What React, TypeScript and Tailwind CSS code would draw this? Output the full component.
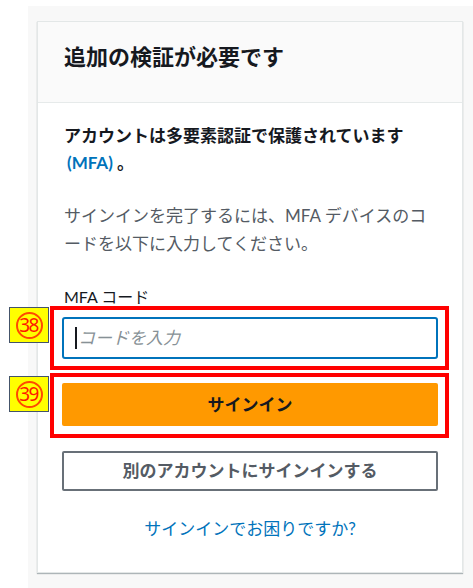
import React from "react";

const font = { fontFamily: '"Lato", "Noto Sans CJK JP", "Noto Sans", sans-serif' };

function Badge({ n, className }: { n: string; className: string }) {
  return (
    <div
      className={`absolute w-[40px] h-[36px] bg-[#ffff00] border border-[#44546a] flex items-center justify-center ${className}`}
    >
      <div className="w-[27px] h-[27px] rounded-full border-2 border-[#ff4a00] flex items-center justify-center">
        <span
          className="text-[#ff1a00] text-[19px] leading-none tracking-[-1.5px] pr-[1px]"
          style={{ fontFamily: '"Liberation Sans Narrow", "Noto Sans", sans-serif' }}
        >
          {n}
        </span>
      </div>
    </div>
  );
}

export default function App() {
  return (
    <div className="w-[473px] h-[588px] bg-white pl-[28px] pt-[6px] overflow-hidden" style={font}>
      <div className="w-full h-full bg-[#f8f8f8] pl-[9px] pt-[15px]">
        <div className="w-[426px] h-[552px] bg-white border border-[#e3e7e7] shadow-[0_1px_1px_0_rgba(0,28,36,0.3)] flex flex-col">
          <div className="h-[81px] bg-[#fafafa] border-b border-[#e6eaea] px-[26px] pt-[21px]">
            <h1 className="text-[22px] leading-[28px] font-bold text-[#16191f]">追加の検証が必要です</h1>
          </div>
          <div className="flex flex-col px-6 pt-[19px]">
            <p className="text-[17px] leading-[27px] font-bold text-[#16191f] pl-[2px]">
              アカウントは多要素認証で保護されています
              <br />
              <span className="text-[#0073bb] pl-[3px]">(MFA)</span> 。
            </p>
            <p className="mt-[26px] text-[17px] leading-[28px] text-[#545b64] pl-[2px]">
              サインインを完了するには、MFA デバイスのコ
              <br />
              ードを以下に入力してください。
            </p>
            <label className="mt-[28px] text-[16px] leading-[22px] text-[#16191f] pl-[2px]">MFA コード</label>
            <div className="relative mt-[9px]">
              <div className="h-[42px] w-full rounded-[3px] border-2 border-[#0073bb] bg-white flex items-center pl-[11px]">
                <span className="w-[2px] h-[22px] bg-[#16191f] mr-[1px]" />
                <span className="text-[17px] italic text-[#879196]">コードを入力</span>
              </div>
              <div className="absolute -left-[12px] -right-[11px] -top-[11px] -bottom-[11px] border-4 border-[#ff0000] pointer-events-none" />
              <Badge n="38" className="-left-[53px] -top-[10px]" />
            </div>
            <div className="relative mt-[24px]">
              <button className="h-[43px] w-full rounded-[2px] bg-[#ff9900] text-[17px] font-bold text-[#16191f]">
                サインイン
              </button>
              <div className="absolute -left-[12px] -right-[11px] -top-[10px] -bottom-[12px] border-4 border-[#ff0000] pointer-events-none" />
              <Badge n="39" className="-left-[53px] -top-[7px]" />
            </div>
            <button className="mt-[25px] h-[40px] w-full rounded-[2px] border-2 border-[#687078] bg-white text-[17px] font-bold text-[#545b64]">
              別のアカウントにサインインする
            </button>
            <div className="mt-[26px] text-center text-[17px] leading-[24px] text-[#0073bb]">サインインでお困りですか?</div>
          </div>
        </div>
      </div>
    </div>
  );
}
